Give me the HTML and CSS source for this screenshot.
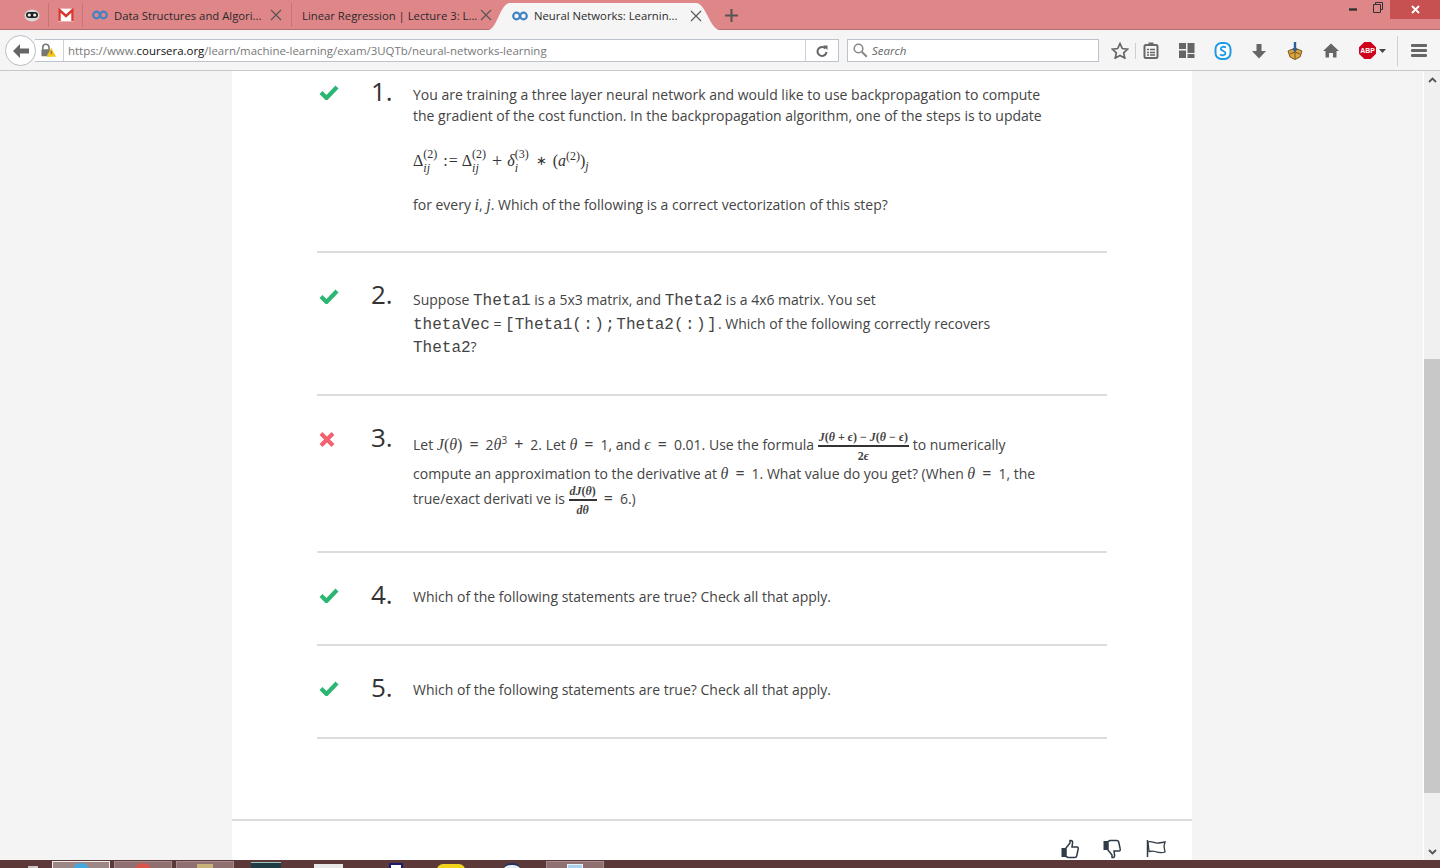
FILE: index.html
```html
<!DOCTYPE html>
<html lang="en">
<head>
<meta charset="utf-8">
<title>Neural Networks: Learning</title>
<link rel="stylesheet" href="styles.css">
</head>
<body>
<div class="window">
  <header class="tabstrip">
    <div class="pinned pinned-robot"><svg width="16" height="14" viewBox="0 0 16 14"><ellipse cx="8" cy="7.5" rx="7.5" ry="6" fill="#d9d9d9"/><rect x="2" y="4" width="12" height="6" rx="3" fill="#222"/><circle cx="5.3" cy="7" r="1.6" fill="#eee"/><circle cx="10.7" cy="7" r="1.6" fill="#eee"/></svg></div>
    <div class="pinned"><svg width="16" height="14" viewBox="0 0 16 14"><rect x="0.5" y="0.5" width="15" height="13" fill="#fff" stroke="#e9b3ae"/><path d="M1.500 13V2L8 8l6.500-6v11" fill="none" stroke="#d93a2f" stroke-width="2.400"/></svg></div>
    <div class="tab tab-first">
      <svg class="favicon" width="16" height="10" viewBox="0 0 16 10"><circle cx="4.500" cy="5" r="3.300" fill="none" stroke="#3f83c6" stroke-width="2.200"/><circle cx="11.500" cy="5" r="3.300" fill="none" stroke="#3f83c6" stroke-width="2.200"/></svg>
      <span class="tab-title">Data Structures and Algori...</span>
      <svg class="tab-close" width="12" height="12" viewBox="0 0 12 12"><path d="M1 1l10 10M11 1L1 11" stroke="#555" stroke-width="1.1"/></svg>
    </div>
    <div class="tab tab-second">
      <span class="tab-title">Linear Regression | Lecture 3: L...</span>
      <svg class="tab-close" width="12" height="12" viewBox="0 0 12 12"><path d="M1 1l10 10M11 1L1 11" stroke="#555" stroke-width="1.1"/></svg>
    </div>
    <div class="tab tab-active">
      <svg class="favicon" width="16" height="10" viewBox="0 0 16 10"><circle cx="4.500" cy="5" r="3.300" fill="none" stroke="#3f83c6" stroke-width="2.200"/><circle cx="11.500" cy="5" r="3.300" fill="none" stroke="#3f83c6" stroke-width="2.200"/></svg>
      <span class="tab-title">Neural Networks: Learnin...</span>
      <svg class="tab-close" width="12" height="12" viewBox="0 0 12 12"><path d="M1 1l10 10M11 1L1 11" stroke="#555" stroke-width="1.1"/></svg>
    </div>
    <svg class="newtab" width="13" height="13" viewBox="0 0 13 13"><path d="M6.500 0v13M0 6.500h13" stroke="#555" stroke-width="2"/></svg>
    <div class="winctl">
      <svg width="9" height="3" viewBox="0 0 9 3"><rect width="8" height="2.4" y="0.3" fill="#333"/></svg>
      <svg class="win-restore" width="10" height="11" viewBox="0 0 10 11"><path d="M2.500 2.500V.5h7v7H8M.5 2.500h7v8h-7z" fill="none" stroke="#333"/></svg>
      <div class="win-close"><svg width="9" height="9" viewBox="0 0 9 9"><path d="M1 1l7 7M8 1L1 8" stroke="#fff" stroke-width="1.800"/></svg></div>
    </div>
  </header>

  <nav class="toolbar">
    <div class="back"><svg width="18" height="16" viewBox="0 0 18 16"><path d="M8 1L1 8l7 7V10.500h9v-5H8z" fill="#666"/></svg></div>
    <div class="urlbar">
      <svg class="lock" width="16" height="15" viewBox="0 0 18 16"><path d="M2 7V4.500a3.500 3.500 0 0 1 7 0V7" fill="none" stroke="#777" stroke-width="1.800"/><rect x="0.500" y="6.500" width="10" height="8" rx="1" fill="#777"/><path d="M11.500 5l5.500 10H6z" fill="#f5c518"/><rect x="11" y="8.500" width="1" height="3.500" fill="#555"/></svg>
      <span class="url"><span class="url-path">https://www.</span>coursera.org<span class="url-path">/learn/machine-learning/exam/3UQTb/neural-networks-learning</span></span>
      <span class="reload"><svg width="12" height="12" viewBox="0 0 12 12"><path d="M9.500 3.500a4.500 4.500 0 1 0 1 3.500" fill="none" stroke="#666" stroke-width="2"/><path d="M7 0.500h4.500V5z" fill="#666"/></svg></span>
    </div>
    <div class="searchbar">
      <svg width="15" height="15" viewBox="0 0 15 15"><circle cx="5.500" cy="5.500" r="4.300" fill="none" stroke="#888" stroke-width="1.600"/><path d="M8.800 8.800l5 5" stroke="#888" stroke-width="2"/></svg>
      <span class="search-label">Search</span>
    </div>
    <div class="tools">
      <svg class="tool tool-star" width="18" height="17" viewBox="0 0 18 17"><path d="M9 1.500l2.300 5 5.400.6-4 3.700 1.100 5.300L9 13.400l-4.800 2.700 1.100-5.300-4-3.700 5.400-.6z" fill="none" stroke="#666" stroke-width="1.700"/></svg>
      <span class="tool-sep"></span>
      <svg class="tool tool-list" width="16" height="17" viewBox="0 0 16 17"><rect x="1.500" y="3" width="13" height="13" rx="1.500" fill="none" stroke="#666" stroke-width="2"/><rect x="5.500" y="0.500" width="5" height="3" fill="#666"/><path d="M4 7.500h2M7 7.500h5M4 10.500h2M7 10.500h5M4 13h2M7 13h5" stroke="#666" stroke-width="1.300"/></svg>
      <svg class="tool" width="16" height="15" viewBox="0 0 16 15"><rect width="7" height="6" fill="#666"/><rect x="8.500" width="7" height="10" fill="#666"/><rect y="7.500" width="7" height="7.500" fill="#666"/><rect x="8.500" y="11" width="7" height="4" fill="#666"/></svg>
      <svg class="tool" width="18" height="18" viewBox="0 0 18 18"><rect x="1.500" y="1" width="15" height="16" rx="6" fill="#fff" stroke="#1e9be8" stroke-width="2"/><path d="M12 5.500C9.500 4 6.500 5 6.800 7c.3 2 4.500 2 4.700 4s-3 3-5.500 1.500" fill="none" stroke="#1e9be8" stroke-width="1.800"/></svg>
      <svg class="tool" width="16" height="16" viewBox="0 0 16 16"><path d="M5.500 1h5v7H15l-7 7.500L1 8h4.500z" fill="#666"/></svg>
      <svg class="tool" width="18" height="18" viewBox="0 0 18 18"><path d="M2 9l7-3 7 3-2 6-5 2.500L4 15z" fill="#d9a441" stroke="#7a5a1c"/><path d="M9 6v11M4 12l5-2 5 2" fill="none" stroke="#7a5a1c"/><path d="M7.800 0h2.400v7H12l-3 3-3-3h1.800z" fill="#2c5f9e"/></svg>
      <svg class="tool tool-home" width="16" height="15" viewBox="0 0 16 15"><path d="M8 0.500L0 8h2.500v6.500h3.500V10h4v4.500h3.500V8H16z" fill="#666"/></svg>
      <svg class="tool tool-abp" width="17" height="17" viewBox="0 0 16 16"><path d="M5 0h6l5 5v6l-5 5H5l-5-5V5z" fill="#d0021b"/><text x="8" y="10.500" class="abp-text">ABP</text></svg>
      <svg class="tool-caret" width="7" height="4" viewBox="0 0 7 4"><path d="M0 0h7L3.500 4z" fill="#444"/></svg>
      <span class="tool-sep tool-sep-last"></span>
      <svg class="tool-menu" width="16" height="13" viewBox="0 0 16 13"><rect width="16" height="3" rx="1" fill="#666"/><rect y="5" width="16" height="3" rx="1" fill="#666"/><rect y="10" width="16" height="3" rx="1" fill="#666"/></svg>
    </div>
  </nav>

  <main class="viewport">
    <div class="page">
      <div class="sheet">
        <section class="question q-one">
          <svg class="mark" width="20" height="16" viewBox="0 0 20 16"><path d="M2 8.500l5.500 5.500L18 3" fill="none" stroke="#2bb673" stroke-width="4.200"/></svg>
          <div class="number">1.</div>
          <div class="body">
            <p class="line">You are training a three layer neural network and would like to use backpropagation to compute</p>
            <p class="line">the gradient of the cost function. In the backpropagation algorithm, one of the steps is to update</p>
            <p class="formula"><span>Δ</span><span class="stack"><span>(2)</span><i>ij</i></span><span class="assign">:=</span><span>Δ</span><span class="stack"><span>(2)</span><i>ij</i></span><span class="op">+</span><i>δ</i><span class="stack"><span>(3)</span><i>i</i></span><span class="star">∗</span><span>(</span><i>a</i><sup class="sup-small">(2)</sup><span>)</span><sub class="sub-small"><i>j</i></sub></p>
            <p class="line line-for">for every <i class="m">i</i>, <i class="m">j</i>. Which of the following is a correct vectorization of this step?</p>
          </div>
        </section>

        <section class="question q-two">
          <svg class="mark" width="20" height="16" viewBox="0 0 20 16"><path d="M2 8.500l5.500 5.500L18 3" fill="none" stroke="#2bb673" stroke-width="4.200"/></svg>
          <div class="number">2.</div>
          <div class="body body-code">
            <p class="line-code">Suppose <code>Theta1</code> is a 5x3 matrix, and <code>Theta2</code> is a 4x6 matrix. You set</p>
            <p class="line-code"><code>thetaVec</code> = <code>[Theta1<span class="wide">(:);</span>Theta2<span class="wide">(:)]</span></code>. Which of the following correctly recovers</p>
            <p class="line-code"><code>Theta2</code>?</p>
          </div>
        </section>

        <section class="question q-three">
          <svg class="mark mark-x" width="16" height="15" viewBox="0 0 16 15"><path d="M2 1.500l12 12M14 1.500l-12 12" fill="none" stroke="#f2616d" stroke-width="4"/></svg>
          <div class="number">3.</div>
          <div class="body body-three">
            <p class="line-a">Let <i class="m">J</i><span class="m">(</span><i class="m">θ</i><span class="m">)</span><span class="rel">=</span>2<i class="m">θ</i><sup class="sup-tiny">3</sup><span class="rel">+</span>2. Let <i class="m">θ</i><span class="rel">=</span>1, and <i class="m">ϵ</i><span class="rel">=</span>0.01. Use the formula <span class="frac"><span class="frac-top"><i>J</i>(<i>θ</i> + <i>ϵ</i>) − <i>J</i>(<i>θ</i> − <i>ϵ</i>)</span><span class="frac-bot">2<i>ϵ</i></span></span> to numerically</p>
            <p class="line-b">compute an approximation to the derivative at <i class="m">θ</i><span class="rel">=</span>1. What value do you get? (When <i class="m">θ</i><span class="rel">=</span>1, the</p>
            <p class="line-c">true/exact derivati ve is <span class="frac"><span class="frac-top"><i>dJ</i>(<i>θ</i>)</span><span class="frac-bot"><i>dθ</i></span></span><span class="rel">=</span>6.)</p>
          </div>
        </section>

        <section class="question q-four">
          <svg class="mark" width="20" height="16" viewBox="0 0 20 16"><path d="M2 8.500l5.500 5.500L18 3" fill="none" stroke="#2bb673" stroke-width="4.200"/></svg>
          <div class="number">4.</div>
          <div class="body body-short"><p class="line">Which of the following statements are true? Check all that apply.</p></div>
        </section>

        <section class="question q-five">
          <svg class="mark" width="20" height="16" viewBox="0 0 20 16"><path d="M2 8.500l5.500 5.500L18 3" fill="none" stroke="#2bb673" stroke-width="4.200"/></svg>
          <div class="number">5.</div>
          <div class="body body-short"><p class="line">Which of the following statements are true? Check all that apply.</p></div>
        </section>

        <div class="foot">
          <svg width="20" height="20" viewBox="0 0 20 20"><path d="M6 9l4-5V1.500c2-.5 3 1 2.500 3L12 8h5c1 0 1.500 1 1.200 2l-1.500 7c-.2 1-1 1.500-2 1.500H8L6 17.500z" fill="#fff" stroke="#2f3b46" stroke-width="1.500"/><rect x="1.500" y="9" width="4.500" height="9" fill="#2f3b46"/></svg>
          <svg width="20" height="20" viewBox="0 0 20 20"><path d="M6 11l4 5v2.500c2 .5 3-1 2.500-3L12 12h5c1 0 1.500-1 1.200-2l-1.500-7c-.2-1-1-1.500-2-1.500H8L6 2.500z" fill="#fff" stroke="#2f3b46" stroke-width="1.500"/><rect x="1.500" y="2" width="4.500" height="9" fill="#2f3b46"/></svg>
          <svg class="foot-flag" width="20" height="20" viewBox="0 0 20 20"><path d="M1.500 1v17" stroke="#2f3b46" stroke-width="1.500"/><path d="M2 3c4-1.500 7 2 11 1 2-.5 4-.5 6-1l-1 4 1 6c-4 1.500-7 .5-10-.5-2-.7-4-.5-6 0z" fill="#fff" stroke="#2f3b46" stroke-width="1.300"/></svg>
        </div>
      </div>
    </div>
    <aside class="scrollbar">
      <svg class="arrow" width="9" height="6" viewBox="0 0 9 6"><path d="M1 5l3.500-3.500L8 5" fill="none" stroke="#555" stroke-width="1.800"/></svg>
      <div class="thumb"></div>
      <svg class="arrow" width="9" height="6" viewBox="0 0 9 6"><path d="M1 1l3.500 3.500L8 1" fill="none" stroke="#555" stroke-width="1.800"/></svg>
    </aside>
  </main>

  <footer class="taskbar">
    <span class="task-arrow"></span>
    <span class="task task-on"><span class="task-dot task-blue"></span></span>
    <span class="task"><span class="task-dot task-red"></span></span>
    <span class="task"><span class="task-sq task-tan"></span></span>
    <span class="pin pin-a"></span>
    <span class="pin pin-b"></span>
    <span class="pin pin-c"></span>
    <span class="pin pin-d"></span>
    <span class="pin pin-e"></span>
    <span class="task task-last"><span class="task-sq task-sky"></span></span>
  </footer>
</div>
</body>
</html>
```
FILE: styles.css
```css
* { box-sizing: border-box; }
html, body { margin: 0; padding: 0; height: 100%; overflow: hidden; }
body { font-family: "Open Sans", sans-serif; color: #333; background: #fff; }
p { margin: 0; }

.window { width: 1440px; height: 868px; display: flex; flex-direction: column; overflow: hidden; }

/* Tab strip */
.tabstrip { height: 30px; flex: none; background: #df8689; border-bottom: 1px solid #b56d70; display: flex; align-items: flex-end; padding-left: 15px; position: relative; font-size: 11.3px; color: #2a2a2a; }
.pinned { width: 34px; height: 24px; margin-bottom: 2px; display: flex; align-items: center; justify-content: center; border-right: 1px solid #c87477; }
.tab { height: 24px; margin-bottom: 2px; display: flex; align-items: center; white-space: nowrap; position: relative; }
.tab-first { width: 209px; padding-left: 9px; border-right: 1px solid #c87477; }
.tab-second { width: 210px; padding-left: 10px; }
.tab-active { width: 232px; height: 27px; margin: 0 0 -1px -14px; padding: 0 0 2px 24px; background: #f5f5f5; clip-path: path("M0 27C9 27 12 0 22 0H208C218 0 222 27 232 27Z"); z-index: 1; }
.favicon { flex: none; margin-right: 6px; }
.tab-close { position: absolute; right: 10px; top: 6px; }
.tab-first .tab-close { right: 9px; }
.tab-active .tab-close { right: 18px; top: 7px; }
.newtab { margin: 0 0 7px 5px; }
.winctl { position: absolute; top: 0; right: 0; height: 19px; display: flex; align-items: center; }
.win-restore { margin: 0 7px 0 15px; position: relative; top: -2px; }
.win-close { width: 50px; height: 19px; background: #c75050; display: flex; align-items: center; justify-content: center; }

/* Toolbar */
.toolbar { height: 41px; flex: none; background: #f5f5f5; border-bottom: 1px solid #c9c9c9; display: flex; align-items: center; padding: 1px 0 0 5px; position: relative; }
.back { width: 31px; height: 31px; border-radius: 50%; background: #fff; border: 1px solid #b7bec6; display: flex; align-items: center; justify-content: center; flex: none; z-index: 1; }
.urlbar { width: 804px; height: 23px; margin-left: -1px; background: #fff; border: 1px solid #bcc3cb; border-left: 0; display: flex; align-items: center; position: relative; font-size: 11.45px; color: #777; }
.lock { margin-left: 6px; flex: none; }
.url { margin-left: 6px; padding-left: 4px; border-left: 1px solid #d0d0d0; height: 21px; line-height: 21px; color: #111; white-space: nowrap; }
.url-path { color: #777; }
.reload { position: absolute; right: 0; top: 0; height: 21px; width: 33px; display: flex; align-items: center; justify-content: center; border-left: 1px solid #d0d0d0; }
.searchbar { width: 252px; height: 23px; margin-left: 8px; background: #fff; border: 1px solid #bcc3cb; display: flex; align-items: center; padding-left: 5px; font-size: 11.5px; color: #666; }
.search-label { font-style: italic; margin-left: 4px; }
.tools { display: flex; align-items: center; margin-left: 12px; position: relative; flex: 1; height: 100%; }
.tool { flex: none; margin-right: 19px; }
.tool-list { margin-right: 20px; }
.tool-home { margin-right: 20px; }
.tool-star { margin-right: 6px; }
.tool-sep { width: 1px; height: 16px; background: #cfcfcf; flex: none; margin-right: 7px; }
.abp-text { font-family: "Liberation Sans", sans-serif; font-size: 6.5px; font-weight: 700; fill: #fff; text-anchor: middle; }
.tool-abp { margin-right: 3px; }
.tool-caret { margin-right: 11px; flex: none; }
.tool-sep-last { height: 30px; margin-right: 13px; }
.tool-menu { flex: none; }

/* Main viewport */
.viewport { flex: 1; display: flex; min-height: 0; }
.page { flex: 1; background: #f4f4f4; display: flex; justify-content: flex-start; padding-left: 232px; overflow: hidden; }
.sheet { width: 960px; background: #fff; padding: 0 85px; flex: none; position: relative; }
.question { display: flex; align-items: flex-start; border-bottom: 2px solid #dcdcdc; position: relative; }
.mark { width: 20px; margin-left: 2px; margin-right: 32px; flex: none; }
.mark-x { width: 16px; margin-right: 36px; }
.number { width: 42px; flex: none; font-size: 26px; line-height: 30px; color: #333; margin-top: -1px; }
.body { flex: 1; font-size: 14px; color: #444; }
.line { line-height: 21px; white-space: nowrap; }
.m { font-family: "Liberation Serif", serif; font-size: 16px; }
.rel { font-size: 16px; margin: 0 7px; }

.q-one { height: 182px; padding-top: 6px; }
.q-one .mark { margin-top: 7px; }
.q-one .body { padding-top: 7px; }
.formula { margin-top: 22px; height: 26px; line-height: 26px; font-family: "Liberation Serif", serif; font-size: 16px; white-space: nowrap; display: flex; align-items: center; color: #333; }
.stack { display: inline-flex; flex-direction: column; width: 16px; font-size: 12px; line-height: 14px; margin-right: 4px; padding-bottom: 1px; }
.assign { margin-right: 3px; letter-spacing: 1px; }
.op { font-size: 18px; margin-right: 5px; }
.star { font-size: 13px; margin: 0 6px 0 1px; }
.sup-small { font-size: 12px; line-height: 1; position: relative; top: -5px; vertical-align: baseline; }
.sub-small { font-size: 12px; line-height: 1; position: relative; top: 5px; vertical-align: baseline; }
.line-for { margin-top: 20px; }

.q-two { height: 143px; padding-top: 27px; }
.q-two .mark { margin-top: 8px; }
.body-code { padding-top: 8px; }
.line-code { height: 23.500px; line-height: 24px; white-space: nowrap; }
code { font-family: "Liberation Mono", monospace; font-size: 16px; }
.wide { letter-spacing: 1.400px; }

.q-three { height: 157px; padding-top: 27px; }
.q-three .mark { margin-top: 9px; }
.body-three { padding-top: 3px; }
.line-a { height: 36px; line-height: 36px; white-space: nowrap; }
.line-b { line-height: 21px; white-space: nowrap; margin-top: 1px; }
.line-c { height: 36px; line-height: 36px; white-space: nowrap; margin-top: -4px; }
.sup-tiny { font-size: 10px; line-height: 1; position: relative; top: -6px; vertical-align: baseline; }
.frac { display: inline-flex; flex-direction: column; align-items: center; vertical-align: middle; font-family: "Liberation Serif", serif; font-size: 12px; line-height: 14px; }
.frac-top { border-bottom: 2px solid #333; padding: 0 1px 1px; white-space: nowrap; font-weight: 700; }
.frac-bot { padding-top: 2px; font-weight: 700; }

.q-four, .q-five { height: 93px; padding-top: 27px; }
.q-four .mark, .q-five .mark { margin-top: 7px; }
.body-short { padding-top: 6px; }

.foot { position: absolute; left: 0; right: 0; top: 748px; height: 41px; border-top: 2px solid #dcdcdc; display: flex; justify-content: flex-end; gap: 22px; padding: 18px 26px 0 0; }
.foot-flag { margin-left: 2px; }

/* Scrollbar */
.scrollbar { width: 17px; flex: none; background: #f0f0f0; border-left: 1px solid #fff; display: flex; flex-direction: column; align-items: center; justify-content: space-between; position: relative; padding: 6px 0 5px; }
.thumb { position: absolute; top: 288px; left: 0; right: 0; height: 434px; background: #c8c8c8; }

/* Taskbar */
.taskbar { height: 8px; flex: none; background: #5c3838; display: flex; align-items: flex-start; padding-left: 28px; overflow: hidden; }
.task-arrow { width: 10px; height: 2px; margin: 6px 14px 0 0; background: #cfc4c4; flex: none; }
.task { width: 58px; height: 8px; margin-right: 4px; margin-top: 1px; background: #8f6f6f; border: 1px solid #a58c8c; border-bottom: 0; display: flex; justify-content: center; flex: none; }
.task-on { background: #9d8686; border-color: #f0eaea; }
.task-dot { width: 18px; height: 18px; border-radius: 50%; margin-top: 1px; }
.task-blue { background: #3fa9e0; }
.task-red { background: #d9534a; }
.task-sq { width: 16px; height: 10px; margin-top: 2px; }
.task-tan { background: #c9b27a; }
.task-sky { background: #a9d0ee; border: 1px solid #e6f1fa; }
.pin { height: 8px; flex: none; margin-top: 2px; }
.pin-a { width: 30px; margin-left: 13px; background: #1f3c44; border-top: 1px solid #9fc4c4; }
.pin-b { width: 29px; margin-left: 33px; margin-top: 4px; background: #e8e8e8; }
.pin-c { width: 14px; margin-left: 46px; margin-top: 3px; background: #fff; border: 2px solid #1c1c6e; border-bottom: 0; }
.pin-d { width: 28px; margin-left: 34px; margin-top: 4px; background: #f2d21c; border-radius: 6px 6px 0 0; }
.pin-e { width: 18px; margin-left: 38px; margin-top: 3px; background: #e8eef4; border-radius: 9px 9px 0 0; border-top: 2px solid #22335e; }
.task-last { margin-left: 25px; }
```
